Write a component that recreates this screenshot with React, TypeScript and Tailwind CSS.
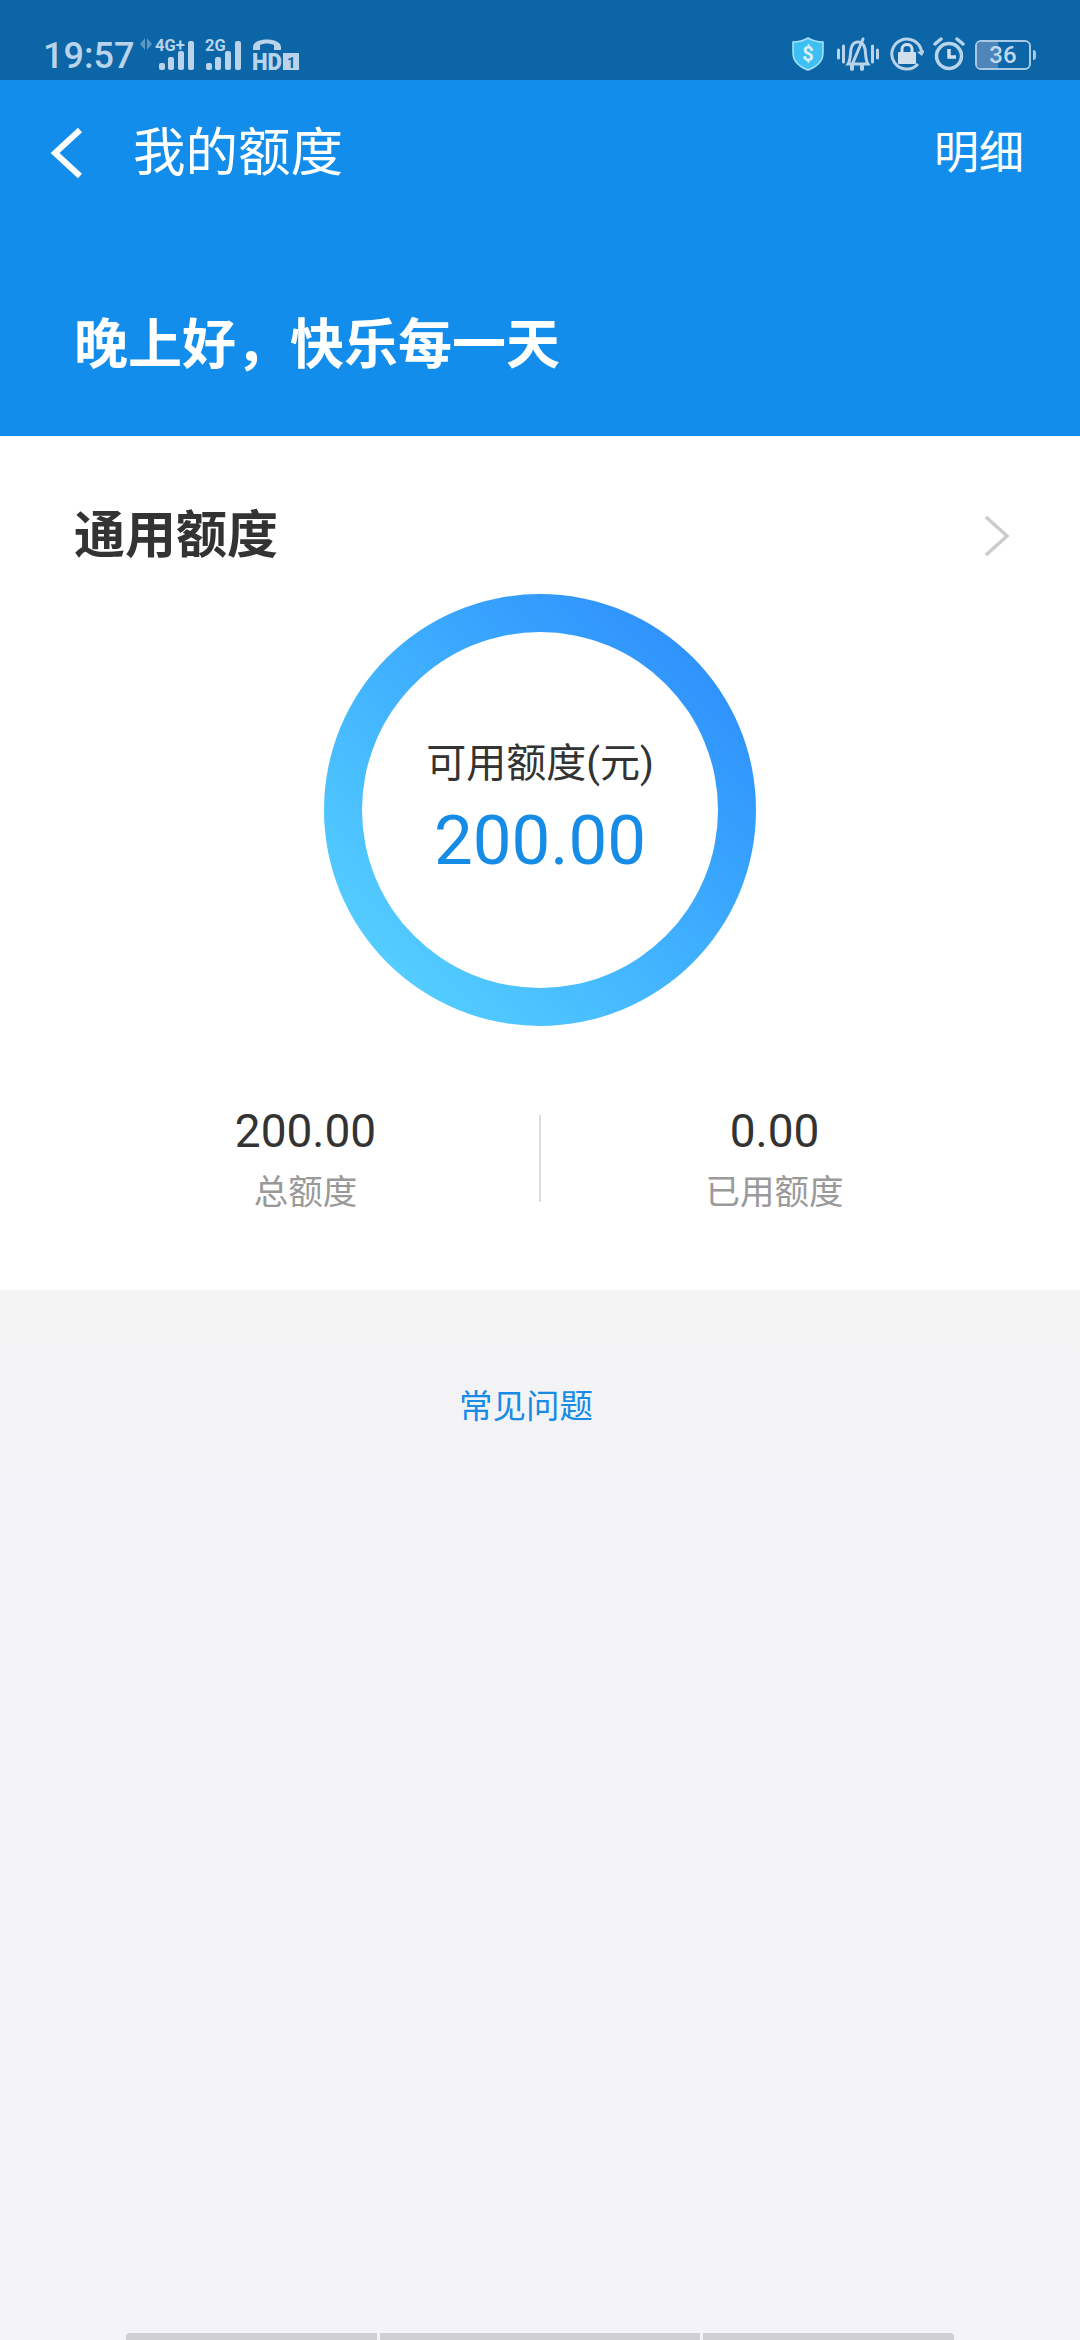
const font = { fontFamily: '"Roboto", "Noto Sans CJK SC", sans-serif' };

function SignalBars() {
    return (
        <g fill="#b9d3ea">
            <rect x="1" y="23" width="6" height="7" rx="2" />
            <rect x="10" y="17" width="6" height="13" rx="2" />
            <rect x="20" y="11" width="6" height="19" rx="2" />
            <rect x="30" y="1" width="6" height="29" rx="2" />
        </g>
    );
}

function Signal({ label, w, dx }: { label: string; w: number; dx: number }) {
    return (
        <svg width={w} height="34" viewBox={`0 0 ${w} 34`} className="overflow-visible">
            <g transform={`translate(${dx} 3)`}>
                <SignalBars />
            </g>
            <text x="0" y="14" fontSize="16.500" fontWeight="700" fill="#b9d3ea" fontFamily="Roboto">
                {label}
            </text>
        </svg>
    );
}

function HdIcon() {
    return (
        <svg width="47" height="34" viewBox="0 0 47 34">
            <path d="M1 10 C1 0 29 0 29 10 L29 13 L22 13 L22 8 C17 6 13 6 8 8 L8 13 L1 13 Z" fill="#b9d3ea" />
            <text x="0" y="33" fontSize="24" fontWeight="900" fill="#b9d3ea" fontFamily="Roboto" textLength="30" lengthAdjust="spacingAndGlyphs">
                HD
            </text>
            <rect x="31" y="16" width="16" height="17" fill="#b9d3ea" />
            <text x="35" y="31" fontSize="15" fontWeight="700" fill="#0b65a7" fontFamily="Roboto">
                1
            </text>
        </svg>
    );
}

function ShieldIcon() {
    return (
        <svg width="32" height="34" viewBox="0 0 32 34">
            <path d="M16 1 C21 4 26 5 31 5 L31 16 C31 25 24 30 16 33 C8 30 1 25 1 16 L1 5 C6 5 11 4 16 1 Z" fill="#3fc0f5" stroke="#a9e2f8" strokeWidth="1.500" />
            <text x="16" y="24" textAnchor="middle" fontSize="20" fontWeight="700" fill="#d8f3fc" fontFamily="Roboto">
                $
            </text>
        </svg>
    );
}

function MutedBell() {
    return (
        <svg width="42" height="34" viewBox="0 0 42 34" fill="none" stroke="#b9d3ea" strokeLinecap="round">
            <path d="M1.500 13 V21 M6.500 9 V25 M35.500 9 V25 M40.500 13 V21" strokeWidth="3" />
            <path d="M11 27 C14 22 13 17 14 12 C15 7 18 5 21 5 C24 5 27 7 28 12 C29 17 28 22 31 27 Z" strokeWidth="3" />
            <path d="M15 28 L26 2" strokeWidth="3" />
            <path d="M15 29 V32 M25 29 V32" strokeWidth="4" />
        </svg>
    );
}

function LockIcon() {
    return (
        <svg width="34" height="34" viewBox="0 0 34 34" fill="none">
            <path d="M28 27 A15 15 0 1 1 31.500 14" stroke="#b9d3ea" strokeWidth="3" />
            <path d="M27 15 L32 19 L35 13 Z" fill="#b9d3ea" />
            <path d="M12 16 V12 C12 6 22 6 22 12 V16" stroke="#cfdfee" strokeWidth="3" />
            <rect x="8" y="15" width="18" height="12" rx="1" fill="#cfdfee" />
        </svg>
    );
}

function AlarmIcon() {
    return (
        <svg width="32" height="34" viewBox="0 0 32 34" fill="none" stroke="#b9d3ea">
            <circle cx="16" cy="19" r="12.500" strokeWidth="3.500" />
            <path d="M16 12 V20 H23" stroke="#cfdfee" strokeWidth="3.500" />
            <path d="M2 7 L8 2 M30 7 L24 2" strokeWidth="3.500" strokeLinecap="round" />
        </svg>
    );
}

function Battery() {
    return (
        <div className="mb-[1px] flex items-center gap-[2px]">
            <div className="relative flex h-[30px] w-[56px] items-center justify-center overflow-hidden rounded-[6px] border-2 border-[#a9c8e4]">
                <div className="absolute inset-y-0 left-0 w-[21px] bg-[#4f86b9]" />
                <span className="relative text-[24px] leading-none font-medium text-[#c3d8ec]">36</span>
            </div>
            <div className="h-[10px] w-[3px] rounded-r-sm bg-[#a9c8e4]" />
        </div>
    );
}

function StatusBar() {
    return (
        <div className="flex h-[80px] shrink-0 items-end bg-[#0b65a7] pr-[44px] pb-[9px] pl-[43px]">
            <span className="mr-[6px] mb-[-3px] text-[36px] leading-[36px] font-medium text-[#b9d3ea]">19:57</span>
            <svg className="mr-[3px] mb-[21px]" width="12" height="12" viewBox="0 0 12 12" fill="#5f97c4">
                <path d="M5 0 V12 L0 6 Z M7 0 V12 L12 6 Z" />
            </svg>
            <Signal label="4G+" w={41} dx={3} />
            <div className="ml-[9px] flex items-end gap-[9px]">
                <Signal label="2G" w={38} dx={0} />
                <HdIcon />
            </div>
            <div className="ml-auto flex items-end">
                <div className="mr-[13px]">
                    <ShieldIcon />
                </div>
                <div className="mr-[11px]">
                    <MutedBell />
                </div>
                <div className="mr-[9px]">
                    <LockIcon />
                </div>
                <div className="mr-[10px]">
                    <AlarmIcon />
                </div>
                <Battery />
            </div>
        </div>
    );
}

function Header() {
    return (
        <div className="flex h-[356px] shrink-0 flex-col bg-[#138deb] text-white">
            <div className="flex h-[146px] items-center pr-[56px] pl-[48px]">
                <svg width="36" height="52" viewBox="0 0 36 52" fill="none" stroke="white" strokeWidth="6">
                    <path d="M32 3 L7 26 L32 49" />
                </svg>
                <span className="ml-[49px] text-[52.500px] leading-none">我的额度</span>
                <span className="ml-auto text-[45px] leading-none">明细</span>
            </div>
            <div className="mt-[85px] pl-[74px] text-[54px] leading-[70px] font-bold">晚上好，快乐每一天</div>
        </div>
    );
}

function Ring() {
    return (
        <div className="flex h-[432px] w-[432px] items-center justify-center rounded-full bg-gradient-to-tr from-[#5cd8ff] to-[#2a86fb]">
            <div className="flex h-[356px] w-[356px] flex-col items-center rounded-full bg-white pt-[102px]">
                <span className="text-[40px] leading-[60px] text-[#333333]">可用额度(元)</span>
                <span className="mt-[7px] text-[69px] leading-[80px] text-[#168ce6]">200.00</span>
            </div>
        </div>
    );
}

function Stat({ value, label }: { value: string; label: string }) {
    return (
        <div className="flex flex-1 flex-col items-center">
            <span className="text-[46px] leading-[62px] text-[#333333]">{value}</span>
            <span className="text-[34.500px] leading-[60px] text-[#999999]">{label}</span>
        </div>
    );
}

function QuotaCard() {
    return (
        <div className="flex h-[854px] shrink-0 flex-col bg-white">
            <div className="mb-[33px] flex shrink-0 items-center pt-[75px] pr-[70px] pl-[74px]">
                <span className="text-[51px] leading-[50px] font-bold text-[#333333]">通用额度</span>
                <svg className="ml-auto" width="26" height="42" viewBox="0 0 26 42" fill="none" stroke="#cccccc" strokeWidth="3.500">
                    <path d="M2 2 L23 21 L2 40" />
                </svg>
            </div>
            <div className="flex justify-center">
                <Ring />
            </div>
            <div className="mt-[74px] flex items-start px-[72px]">
                <Stat value="200.00" label="总额度" />
                <div className="mt-[15px] h-[87px] w-[2px] bg-[#dddddd]" />
                <Stat value="0.00" label="已用额度" />
            </div>
        </div>
    );
}

function BottomHandle() {
    return (
        <div className="mt-auto flex justify-center gap-[3px]">
            <div className="h-[7px] w-[251px] rounded-tl-[4px] bg-[#cfcfd4]" />
            <div className="h-[7px] w-[320px] bg-[#cfcfd4]" />
            <div className="h-[7px] w-[251px] rounded-tr-[4px] bg-[#cfcfd4]" />
        </div>
    );
}

export default function App() {
    return (
        <div className="flex h-[2340px] w-[1080px] flex-col overflow-hidden" style={font}>
            <StatusBar />
            <Header />
            <QuotaCard />
            <div className="flex flex-1 flex-col bg-gradient-to-b from-[#f4f4f4] to-[#f3f3f9] to-[20%]">
                <div className="mt-[92px] pl-[459px] text-[33.500px] leading-[50px] text-[#168ce6]">常见问题</div>
                <BottomHandle />
            </div>
        </div>
    );
}
